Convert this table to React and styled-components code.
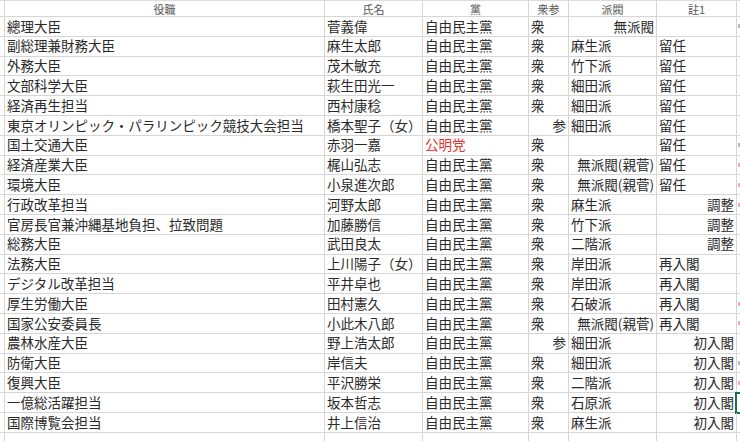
import React from 'react';
import styled, { createGlobalStyle } from 'styled-components';

const GlobalStyle = createGlobalStyle`
  html, body {
    margin: 0;
    padding: 0;
    background: #ffffff;
  }
  body {
    font-family: "Noto Sans CJK JP", "Noto Sans", sans-serif;
    color: #2a2a2a;
  }
`;

const COLS = '5px 320px 98px 106px 40px 88px 80px 1fr';

const Sheet = styled.div`
  width: 740px;
  height: 441px;
  overflow: hidden;
  border-top: 1px solid #dcdcdc;
  box-sizing: border-box;
`;

const Row = styled.div`
  display: grid;
  grid-template-columns: ${COLS};
  height: ${({ $header }) => ($header ? '16px' : '19.8px')};
  box-sizing: border-box;
`;

const Cell = styled.div`
  box-sizing: border-box;
  border-right: 1px solid #d6d6d6;
  border-bottom: 1px solid #d6d6d6;
  padding: 0 2px;
  display: flex;
  align-items: center;
  justify-content: ${({ $align }) => ($align === 'right' ? 'flex-end' : $align === 'center' ? 'center' : 'flex-start')};
  white-space: nowrap;
  overflow: hidden;
  font-size: 13.5px;
  line-height: 1;
  color: ${({ $red }) => ($red ? '#e3322f' : '#2a2a2a')};
  position: relative;
`;

const HeadCell = styled(Cell)`
  font-size: 11px;
  color: #555555;
  justify-content: center;
  padding-top: 1px;
`;

const EdgeCell = styled.div`
  box-sizing: border-box;
  border-bottom: 1px solid #d6d6d6;
  position: relative;
  ${({ $selected }) => ($selected ? 'border: 2px solid #1e7145; border-right: none; margin: -1px 0 -1px -2px;' : '')}
`;

const Mark = styled.span`
  position: absolute;
  left: 1px;
  top: 50%;
  width: 2px;
  height: 4px;
  margin-top: -2px;
  background: ${({ $color }) => $color};
  opacity: 0.7;
`;

const rows = [
  ['總理大臣', '菅義偉', '自由民主黨', '衆', 'L', '無派閥', 'R', '', 'L', 'gray'],
  ['副総理兼財務大臣', '麻生太郎', '自由民主黨', '衆', 'L', '麻生派', 'L', '留任', 'L'],
  ['外務大臣', '茂木敏充', '自由民主黨', '衆', 'L', '竹下派', 'L', '留任', 'L'],
  ['文部科学大臣', '萩生田光一', '自由民主黨', '衆', 'L', '細田派', 'L', '留任', 'L'],
  ['経済再生担当', '西村康稔', '自由民主黨', '衆', 'L', '細田派', 'L', '留任', 'L'],
  ['東京オリンピック・パラリンピック競技大会担当', '橋本聖子（女）', '自由民主黨', '参', 'R', '細田派', 'L', '留任', 'L'],
  ['国土交通大臣', '赤羽一嘉', '公明党', '衆', 'L', '', 'L', '留任', 'L', 'gray', true],
  ['経済産業大臣', '梶山弘志', '自由民主黨', '衆', 'L', '無派閥(親菅)', 'R', '留任', 'L', 'pink'],
  ['環境大臣', '小泉進次郎', '自由民主黨', '衆', 'L', '無派閥(親菅)', 'R', '留任', 'L', 'pink'],
  ['行政改革担当', '河野太郎', '自由民主黨', '衆', 'L', '麻生派', 'L', '調整', 'R', 'pink'],
  ['官房長官兼沖縄基地負担、拉致問題', '加藤勝信', '自由民主黨', '衆', 'L', '竹下派', 'L', '調整', 'R'],
  ['総務大臣', '武田良太', '自由民主黨', '衆', 'L', '二階派', 'L', '調整', 'R'],
  ['法務大臣', '上川陽子（女）', '自由民主黨', '衆', 'L', '岸田派', 'L', '再入閣', 'L'],
  ['デジタル改革担当', '平井卓也', '自由民主黨', '衆', 'L', '岸田派', 'L', '再入閣', 'L'],
  ['厚生労働大臣', '田村憲久', '自由民主黨', '衆', 'L', '石破派', 'L', '再入閣', 'L', 'pink'],
  ['国家公安委員長', '小此木八郎', '自由民主黨', '衆', 'L', '無派閥(親菅)', 'R', '再入閣', 'L', 'pink'],
  ['農林水産大臣', '野上浩太郎', '自由民主黨', '参', 'R', '細田派', 'L', '初入閣', 'R'],
  ['防衛大臣', '岸信夫', '自由民主黨', '衆', 'L', '細田派', 'L', '初入閣', 'R', 'gray'],
  ['復興大臣', '平沢勝栄', '自由民主黨', '衆', 'L', '二階派', 'L', '初入閣', 'R', 'pink'],
  ['一億総活躍担当', '坂本哲志', '自由民主黨', '衆', 'L', '石原派', 'L', '初入閣', 'R', null, false, true],
  ['国際博覧会担当', '井上信治', '自由民主黨', '衆', 'L', '麻生派', 'L', '初入閣', 'R'],
];

const align = (a) => (a === 'R' ? 'right' : 'left');
const markColors = { gray: '#9a9a9a', pink: '#e88a8a' };

const App = () => (
  <>
    <GlobalStyle />
    <Sheet>
      <Row $header>
        <HeadCell />
        <HeadCell>役職</HeadCell>
        <HeadCell>氏名</HeadCell>
        <HeadCell>黨</HeadCell>
        <HeadCell>衆参</HeadCell>
        <HeadCell>派閥</HeadCell>
        <HeadCell>註1</HeadCell>
        <EdgeCell />
      </Row>
      {rows.map(([role, name, party, house, ha, faction, fa, note, na, mark, red, selected]) => (
        <Row key={role}>
          <Cell />
          <Cell>{role}</Cell>
          <Cell>{name}</Cell>
          <Cell $red={red}>{party}</Cell>
          <Cell $align={align(ha)}>{house}</Cell>
          <Cell $align={align(fa)}>{faction}</Cell>
          <Cell $align={align(na)}>{note}</Cell>
          <EdgeCell $selected={selected}>
            {mark && <Mark $color={markColors[mark]} />}
          </EdgeCell>
        </Row>
      ))}
      <Row>
        <Cell />
        <Cell />
        <Cell />
        <Cell />
        <Cell />
        <Cell />
        <Cell />
        <EdgeCell />
      </Row>
    </Sheet>
  </>
);

export default App;
